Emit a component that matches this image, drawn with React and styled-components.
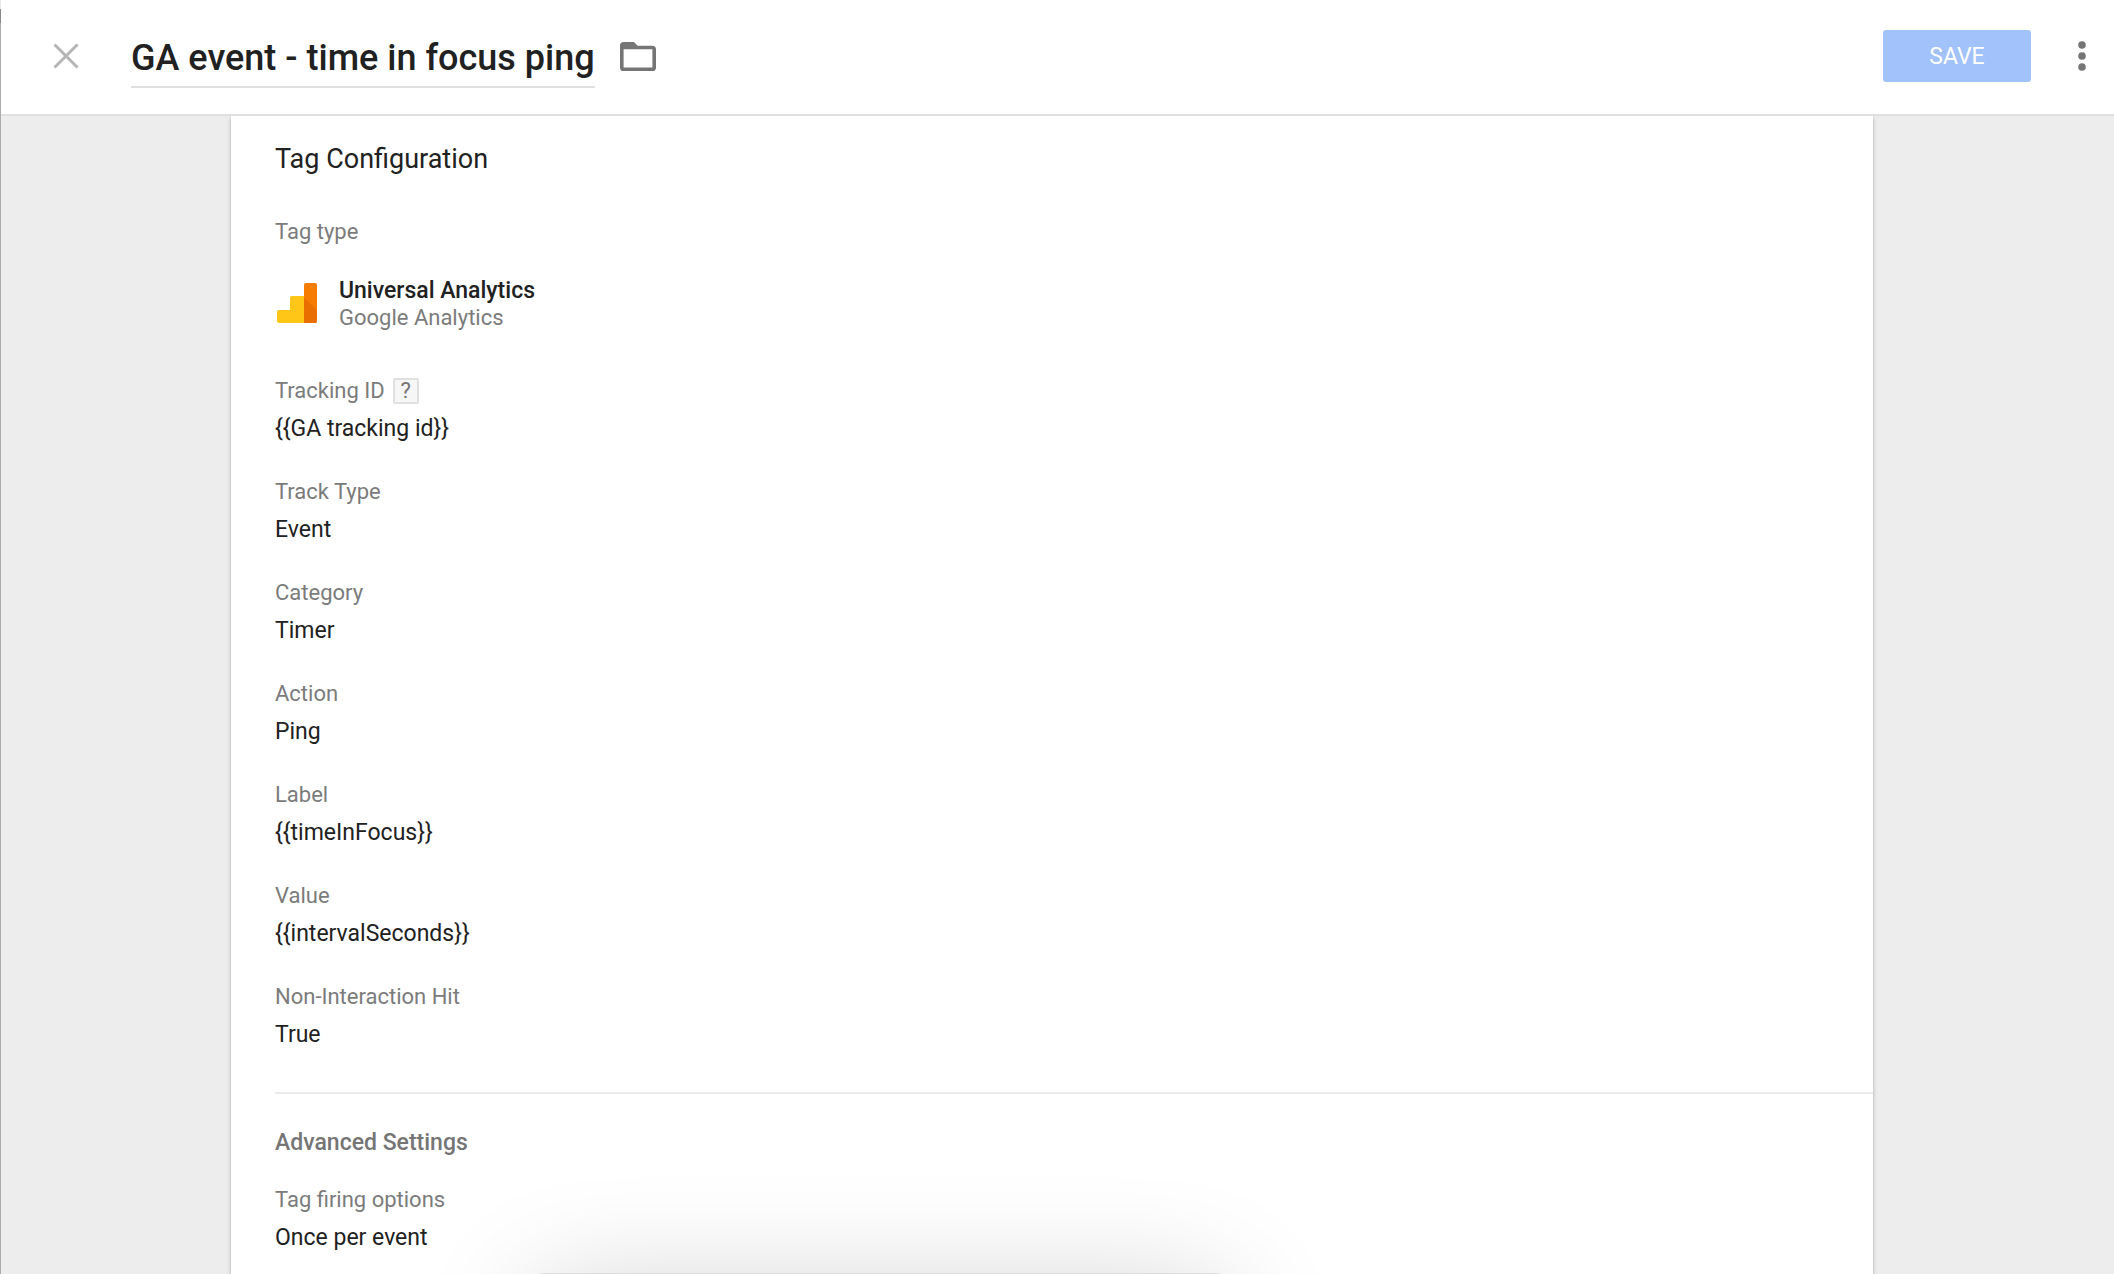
import React from "react";
import styled, { createGlobalStyle } from "styled-components";

const Global = createGlobalStyle`
  *, *::before, *::after { box-sizing: border-box; }
  body { margin: 0; background: #ededed; }
  body, button, input { font-family: Roboto, "Liberation Sans", sans-serif; }
`;

const Page = styled.div`
  min-height: 100vh;
  display: flex;
  flex-direction: column;
  border-left: 1px solid #acacac;
  border-image: linear-gradient(#e8e8e8 10px, #888 10px, #888 24px, #acacac 24px) 1;
  color: #212121;
  overflow: hidden;
`;

const Header = styled.header`
  position: relative;
  z-index: 1;
  display: flex;
  align-items: center;
  height: 116px;
  padding: 0 12px 2px 45px;
  background: #fff;
  border-bottom: 2px solid #e0e0e0;
`;

const IconButton = styled.button`
  display: grid;
  place-items: center;
  width: 40px;
  height: 40px;
  padding: 0;
  border: 0;
  background: none;
  color: ${(p) => p.$color || "#757575"};
  cursor: pointer;
`;

const TitleInput = styled.input`
  field-sizing: content;
  height: 64px;
  margin: 0 23px 0 45px;
  padding: 6px 0 0;
  border: 0;
  border-bottom: 2px solid #e0e0e0;
  outline: 0;
  background: none;
  color: #212121;
  font-size: 36px;
  font-weight: 500;
`;

const Actions = styled.div`
  display: flex;
  align-items: center;
  gap: 31px;
  margin-left: auto;
`;

const SaveButton = styled.button`
  width: 148px;
  height: 52px;
  padding: 1px 0 0;
  border: 0;
  border-radius: 3px;
  background: #a1c2fa;
  color: #fff;
  font-size: 23px;
`;

const Main = styled.main`
  flex: 1;
  display: flex;
  padding: 0 241px 0 230px;
`;

const Card = styled.section`
  flex: 1;
  padding: 24px 0 8px 44px;
  background: #fff;
  box-shadow: 0 2px 4px rgba(0, 0, 0, 0.3);
`;

const CardTitle = styled.h1`
  margin: 0 0 38px;
  font-size: 27px;
  font-weight: 400;
  line-height: 38px;
`;

const Label = styled.dt`
  display: flex;
  align-items: center;
  gap: 8px;
  color: #7b7b7b;
  font-size: 22px;
  line-height: 32px;
`;

const Value = styled.dd`
  margin: 6px 0 0;
  font-size: 23px;
  line-height: 32px;
`;

const Fields = styled.dl`
  display: flex;
  flex-direction: column;
  gap: 31px;
  margin: 0;
`;

const TagType = styled.dd`
  display: flex;
  align-items: center;
  gap: 22px;
  margin: 29px 0 13px;
`;

const TagNames = styled.div`
  display: flex;
  flex-direction: column;
  color: #7b7b7b;
  font-size: 22px;
  line-height: 27px;
`;

const TagName = styled.strong`
  color: #212121;
  font-size: 23px;
  font-weight: 500;
`;

const HelpButton = styled.button`
  width: 26px;
  height: 26px;
  padding: 0;
  border: 2px solid #e0e0e0;
  border-radius: 2px;
  background: #f6f6f6;
  color: #757575;
  font-size: 22px;
  line-height: 22px;
`;

const Divider = styled.hr`
  margin: 41px 0 33px;
  border: 0;
  border-top: 2px solid #ebebeb;
`;

const SectionTitle = styled.h2`
  margin: 0 0 25px;
  color: #757575;
  font-size: 23px;
  font-weight: 500;
  line-height: 32px;
`;

const WindowBelow = styled.div`
  position: fixed;
  left: 535px;
  bottom: -399px;
  width: 690px;
  height: 400px;
  border-radius: 8px;
  background: #dcdcdc;
  box-shadow: 0 20px 120px rgba(0, 0, 0, 0.2);
  pointer-events: none;
`;

const details = [
  { label: "Tracking ID", value: "{{GA tracking id}}", help: true },
  { label: "Track Type", value: "Event" },
  { label: "Category", value: "Timer" },
  { label: "Action", value: "Ping" },
  { label: "Label", value: "{{timeInFocus}}" },
  { label: "Value", value: "{{intervalSeconds}}" },
  { label: "Non-Interaction Hit", value: "True" },
];

function Field({ label, value, help }) {
  return (
    <div>
      <Label>
        {label}
        {help && <HelpButton aria-label={`Help: ${label}`}>?</HelpButton>}
      </Label>
      <Value>{value}</Value>
    </div>
  );
}

function CloseIcon() {
  return (
    <svg width="26" height="26" viewBox="0 0 26 26" fill="none" stroke="currentColor" strokeWidth="3">
      <path d="M1.5 1.5 24.5 24.5M24.5 1.5 1.5 24.5" />
    </svg>
  );
}

function FolderIcon() {
  return (
    <svg width="36" height="29" viewBox="0 0 36 29" fill="currentColor">
      <path
        fillRule="evenodd"
        d="M3.6 0H14l3.6 3.7H32.4A3.6 3.6 0 0 1 36 7.3V25.4A3.6 3.6 0 0 1 32.4 29H3.6A3.6 3.6 0 0 1 0 25.4V3.6A3.6 3.6 0 0 1 3.6 0ZM3.6 7.3V25.4H32.4V7.3Z"
      />
    </svg>
  );
}

function MoreIcon() {
  return (
    <svg width="8" height="30" viewBox="0 0 8 30" fill="currentColor">
      <circle cx="4" cy="4" r="3.8" />
      <circle cx="4" cy="15" r="3.8" />
      <circle cx="4" cy="26" r="3.8" />
    </svg>
  );
}

function AnalyticsIcon() {
  return (
    <svg width="42" height="42" viewBox="-1 1 42 42">
      <path fill="#ffc517" d="M3 28h11V16a2 2 0 0 1 2-2h12v27H3a2 2 0 0 1-2-2v-9a2 2 0 0 1 2-2Z" />
      <path fill="#f57c00" d="M30 1h9a2 2 0 0 1 2 2v36a2 2 0 0 1-2 2H28V3a2 2 0 0 1 2-2Z" />
      <path fill="#e96f00" d="M28 16 41 28V39a2 2 0 0 1-2 2H28Z" />
    </svg>
  );
}

export default function App() {
  return (
    <Page>
      <Global />
      <Header>
        <IconButton aria-label="Close" $color="#b5b5b5">
          <CloseIcon />
        </IconButton>
        <TitleInput aria-label="Tag name" defaultValue="GA event - time in focus ping" />
        <IconButton aria-label="Choose folder">
          <FolderIcon />
        </IconButton>
        <Actions>
          <SaveButton>SAVE</SaveButton>
          <IconButton aria-label="More actions">
            <MoreIcon />
          </IconButton>
        </Actions>
      </Header>
      <Main>
        <Card>
          <CardTitle>Tag Configuration</CardTitle>
          <Fields>
            <div>
              <Label>Tag type</Label>
              <TagType>
                <AnalyticsIcon />
                <TagNames>
                  <TagName>Universal Analytics</TagName>
                  <span>Google Analytics</span>
                </TagNames>
              </TagType>
            </div>
            {details.map((d) => (
              <Field key={d.label} {...d} />
            ))}
          </Fields>
          <Divider />
          <SectionTitle>Advanced Settings</SectionTitle>
          <Fields>
            <Field label="Tag firing options" value="Once per event" />
          </Fields>
        </Card>
      </Main>
      <WindowBelow />
    </Page>
  );
}
